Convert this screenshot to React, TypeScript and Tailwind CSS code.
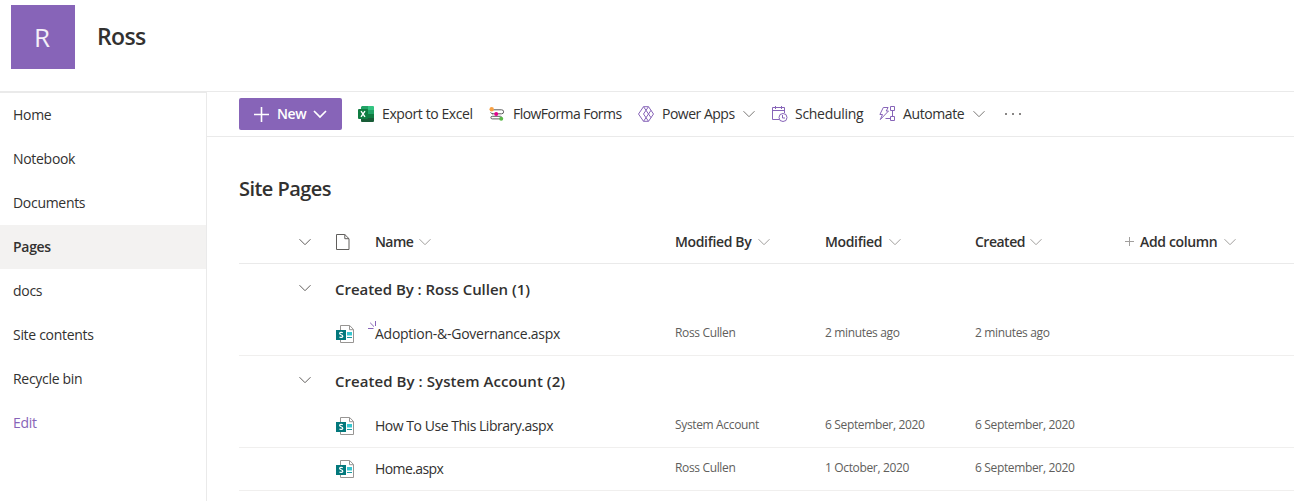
import React from 'react';
import clsx from 'clsx';

interface Page {
  name: string;
  nameClass: string;
  modifiedBy: string;
  modified: string;
  created: string;
  isNew?: boolean;
}

interface Group {
  title: string;
  titleClass: string;
  pages: Page[];
}

const navItems = ['Home', 'Notebook', 'Documents', 'Pages', 'docs', 'Site contents', 'Recycle bin'];

const groups: Group[] = [
  {
    title: 'Created By : Ross Cullen (1)',
    titleClass: 'tracking-[-0.03px]',
    pages: [
      {
        name: 'Adoption-&-Governance.aspx',
        nameClass: 'tracking-[-0.26px]',
        modifiedBy: 'Ross Cullen',
        modified: '2 minutes ago',
        created: '2 minutes ago',
        isNew: true
      }
    ]
  },
  {
    title: 'Created By : System Account (2)',
    titleClass: 'tracking-[0.06px]',
    pages: [
      {
        name: 'How To Use This Library.aspx',
        nameClass: 'tracking-[-0.47px]',
        modifiedBy: 'System Account',
        modified: '6 September, 2020',
        created: '6 September, 2020'
      },
      {
        name: 'Home.aspx',
        nameClass: 'tracking-[-0.6px]',
        modifiedBy: 'Ross Cullen',
        modified: '1 October, 2020',
        created: '6 September, 2020'
      }
    ]
  }
];

const columns = 'grid grid-cols-[96px_40px_300px_150px_150px_150px_1fr] items-center';

function Chevron({ className }: { className?: string }) {
  return (
    <svg width="12" height="12" viewBox="0 0 12 12" fill="none" stroke="currentColor" className={clsx('shrink-0', className)}>
      <path d="M0.5 3.2 6 8.7 11.5 3.2" />
    </svg>
  );
}

function ExcelIcon() {
  return (
    <svg width="16" height="16" viewBox="0 0 16 16" className="shrink-0">
      <path d="M4 0h6v8H3V1z" fill="#21a366" />
      <path d="M10 0h5q1 0 1 1v3h-6z" fill="#33c481" />
      <path d="M10 4h6v4h-6z" fill="#21a366" />
      <path d="M3 4h7v4H3zM10 8h6v4h-6z" fill="#107c41" />
      <path d="M3 8h7v4h6v3q0 1-1 1H4q-1 0-1-1z" fill="#185c37" />
      <rect y="3" width="10" height="10" rx="1" fill="#107c41" />
      <path d="M3 5.2 7 10.8M7 5.2 3 10.8" stroke="#fff" strokeWidth="1.4" />
    </svg>
  );
}

function FlowIcon() {
  return (
    <svg width="16" height="16" viewBox="0 0 16 16" fill="none" className="shrink-0">
      <path
        d="M4 3.800h8.600a2 2 0 0 1 0 4H3M4 7.800q-2 0-2.400-1.500M6 10.300H3.200a1.200 1.200 0 0 0 0 2.600H11M6 10.300h5.500q1.300 0 1.300 2"
        stroke="#5c5c5c"
      />
      <circle cx="2.700" cy="3.200" r="2.200" fill="#f7a145" />
      <circle cx="7.200" cy="7.900" r="2" fill="#e3008c" />
      <circle cx="12.200" cy="12.700" r="2" fill="#5bb947" />
    </svg>
  );
}

function PowerAppsIcon() {
  return (
    <svg width="16" height="16" viewBox="0 0 16 16" fill="none" stroke="#8764b8" className="shrink-0">
      <path d="M5.500.7h5L15.500 8l-5 7.300h-5L.5 8z" strokeLinejoin="round" />
      <path d="M10.500.7 5.500 8l5 7.300M5.500.7 8 4.300M5.500 15.300 8 11.700M8 4.300 13 11.700M8 11.700 13 4.300" />
    </svg>
  );
}

function SchedulingIcon() {
  return (
    <svg width="16" height="16" viewBox="0 0 16 16" fill="none" stroke="#8764b8" className="ml-px -mr-px shrink-0">
      <path d="M7 13.500H.5v-12h12V7M.5 4.500h12M3.500 0v3M9.500 0v3" />
      <circle cx="11" cy="11.500" r="4" />
      <path d="M10.500 9v3H13" />
    </svg>
  );
}

function AutomateIcon() {
  return (
    <svg width="16" height="16" viewBox="0 0 16 16" fill="none" stroke="#8764b8" className="shrink-0">
      <path d="M4.300 1.500h4.800L7.200 5h2.300L1.300 13.600 3.500 8.500H.9z" strokeLinejoin="round" />
      <path d="M11.500.5h4v4h-4zM11.500 10.500h4v4h-4zM13.500 4.500v6M11.500 12.500H6.500" />
    </svg>
  );
}

function DocumentIcon() {
  return (
    <svg width="14" height="16" viewBox="0 0 14 16" fill="none" stroke="#605e5c" className="ml-px shrink-0">
      <path d="M.5.5h8.300l4.200 4.200v10.800H.5z" />
      <path d="M8.800.5v4.200h4.200" />
    </svg>
  );
}

function AspxIcon() {
  return (
    <svg width="19" height="18" viewBox="0 0 19 18" className="ml-px shrink-0">
      <path d="M4.500.5h9.200l3.800 4v13h-13z" fill="#fff" stroke="#979593" />
      <path d="M13.500.7v4h4" fill="none" stroke="#979593" />
      <path d="M11 7h5v3.500h-5z" fill="#37c6d0" />
      <path d="M11 12h5v1h-5z" fill="#1a9ba1" />
      <rect y="5" width="10" height="10" fill="#03787c" />
      <path
        d="M6.800 7.700C5.800 7.100 3.600 7.200 3.600 8.500c0 1.500 3.200 1 3.200 2.700 0 1.300-2.200 1.500-3.400.8"
        fill="none"
        stroke="#fff"
        strokeWidth="1.200"
      />
    </svg>
  );
}

// small rays shown at the corner of a freshly added item
function NewGlyph() {
  return (
    <svg width="10" height="10" viewBox="0 0 10 10" fill="none" stroke="#8764b8" className="absolute -left-[7px] -top-[3px]">
      <path d="M7.500 0v5M2.200 1.800 6 5.600M0 7.500h5.500" />
    </svg>
  );
}

interface CommandProps {
  icon: React.ReactNode;
  label: string;
  labelClass: string;
  menu?: boolean;
}

function Command({ icon, label, labelClass, menu }: CommandProps) {
  return (
    <button className="mr-4 flex items-center gap-2">
      {icon}
      <span className={clsx('whitespace-nowrap text-left', labelClass)}>{label}</span>
      {menu && <Chevron className="text-[#797775]" />}
    </button>
  );
}

function CommandBar() {
  return (
    <div className="flex h-[46px] items-center border-y border-[#eaeaea] pl-8 text-sm text-[#323130]">
      <button className="mr-4 flex h-8 w-[103px] items-center rounded-xs bg-[#8764b8] pl-[15px] font-semibold text-white">
        <svg width="15" height="15" viewBox="0 0 15 15" stroke="currentColor" strokeWidth="1.600">
          <path d="M7.500 0v15M0 7.500h15" />
        </svg>
        <span className="ml-2 w-[29px] whitespace-nowrap tracking-[-0.4px]">New</span>
        <svg width="14" height="14" viewBox="0 0 14 14" fill="none" stroke="currentColor" strokeWidth="1.700" className="ml-[7px]">
          <path d="M1 4l6 6 6-6" />
        </svg>
      </button>
      <Command icon={<ExcelIcon />} label="Export to Excel" labelClass="w-[91px] tracking-[-0.4px]" />
      <Command icon={<FlowIcon />} label="FlowForma Forms" labelClass="w-[109px] tracking-[-0.55px]" />
      <Command icon={<PowerAppsIcon />} label="Power Apps" labelClass="w-[73px] tracking-[-0.5px]" menu />
      <Command icon={<SchedulingIcon />} label="Scheduling" labelClass="w-[68px] tracking-[-0.3px]" />
      <Command icon={<AutomateIcon />} label="Automate" labelClass="w-[62px] tracking-[-0.4px]" menu />
      <button className="ml-1 flex gap-[5px]">
        <i className="size-0.5 rounded-full bg-[#605e5c]" />
        <i className="size-0.5 rounded-full bg-[#605e5c]" />
        <i className="size-0.5 rounded-full bg-[#605e5c]" />
      </button>
    </div>
  );
}

function ColumnHeader({ label, labelClass }: { label: string; labelClass?: string }) {
  return (
    <div className="flex items-center gap-1.5">
      <span className={clsx('whitespace-nowrap', labelClass)}>{label}</span>
      <Chevron className="text-[#a19f9d]" />
    </div>
  );
}

function PageRow({ page }: { page: Page }) {
  return (
    <div className={clsx(columns, 'h-[43px] border-b border-[#f0efee] text-xs tracking-[-0.35px] text-[#605e5c]')}>
      <span />
      <AspxIcon />
      <div className="relative text-sm text-[#323130]">
        {page.isNew && <NewGlyph />}
        <span className={page.nameClass}>{page.name}</span>
      </div>
      <span className="-mt-0.5">{page.modifiedBy}</span>
      <span className="-mt-0.5">{page.modified}</span>
      <span className="-mt-0.5">{page.created}</span>
    </div>
  );
}

function PageList() {
  return (
    <div className="pl-8">
      <h2 className="mt-[38px] h-7 text-xl leading-7 font-semibold tracking-[-0.55px] text-[#323130]">Site Pages</h2>
      <div className={clsx(columns, 'mt-[17px] h-11 border-b border-[#eaeaea] text-sm font-semibold tracking-[-0.35px] text-[#323130]')}>
        <Chevron className="ml-[60px] text-[#605e5c]" />
        <DocumentIcon />
        <ColumnHeader label="Name" labelClass="w-[38px] tracking-[-0.6px]" />
        <ColumnHeader label="Modified By" labelClass="w-[77px]" />
        <ColumnHeader label="Modified" labelClass="w-[58px]" />
        <ColumnHeader label="Created" labelClass="w-[49px] tracking-[-0.5px]" />
        <div className="flex items-center gap-1.5">
          <svg width="9" height="9" viewBox="0 0 9 9" stroke="#a19f9d">
            <path d="M4.500 0v9M0 4.500h9" />
          </svg>
          <ColumnHeader label="Add column" labelClass="w-[78px]" />
        </div>
      </div>
      {groups.map((group) => (
        <section key={group.title}>
          <div className={clsx(columns, 'h-[49px]')}>
            <Chevron className="-mt-px ml-[60px] text-[#605e5c]" />
            <h3 className={clsx('pt-0.5 whitespace-nowrap text-[15px] font-semibold text-[#323130]', group.titleClass)}>{group.title}</h3>
          </div>
          {group.pages.map((page) => (
            <PageRow key={page.name} page={page} />
          ))}
        </section>
      ))}
    </div>
  );
}

export default function App() {
  return (
    <div className="flex h-[501px] w-[1294px] flex-col overflow-hidden bg-white font-['Open_Sans','Noto_Sans',sans-serif]">
      <header className="flex h-[91px] shrink-0 items-start pt-[5px] pl-[11px]">
        <div className="flex size-16 items-center justify-center bg-[#8764b8] pr-0.5 text-[26px] text-white/90">R</div>
        <h1 className="ml-[22px] pt-[13px] text-[23px] leading-9 font-semibold tracking-[-0.6px] text-[#323130]">Ross</h1>
      </header>
      <div className="flex grow">
        <nav className="w-[207px] shrink-0 border-t-2 border-r border-[#eaeaea] text-sm tracking-[-0.3px] text-[#323130]">
          {navItems.map((item) => (
            <a key={item} className={clsx('flex h-11 items-center pl-[13px]', item === 'Pages' && 'bg-[#f3f2f1] font-semibold')}>
              {item}
            </a>
          ))}
          <a className="flex h-11 items-center pl-[13px] text-[#8764b8]">Edit</a>
        </nav>
        <main className="grow">
          <CommandBar />
          <PageList />
        </main>
      </div>
    </div>
  );
}
